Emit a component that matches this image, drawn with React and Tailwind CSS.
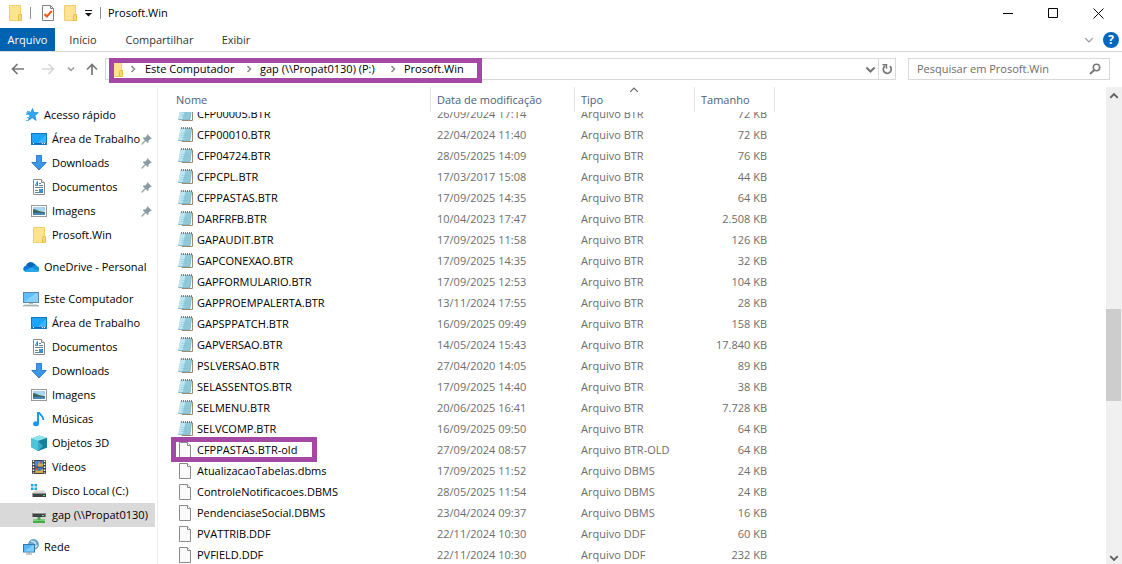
import { useLayoutEffect, useRef } from "react";

const files = [
  ["CFP00005.BTR", "26/09/2024 17:14", "Arquivo BTR", "72 KB"],
  ["CFP00010.BTR", "22/04/2024 11:40", "Arquivo BTR", "72 KB"],
  ["CFP04724.BTR", "28/05/2025 14:09", "Arquivo BTR", "76 KB"],
  ["CFPCPL.BTR", "17/03/2017 15:08", "Arquivo BTR", "44 KB"],
  ["CFPPASTAS.BTR", "17/09/2025 14:35", "Arquivo BTR", "64 KB"],
  ["DARFRFB.BTR", "10/04/2023 17:47", "Arquivo BTR", "2.508 KB"],
  ["GAPAUDIT.BTR", "17/09/2025 11:58", "Arquivo BTR", "126 KB"],
  ["GAPCONEXAO.BTR", "17/09/2025 14:35", "Arquivo BTR", "32 KB"],
  ["GAPFORMULARIO.BTR", "17/09/2025 12:53", "Arquivo BTR", "104 KB"],
  ["GAPPROEMPALERTA.BTR", "13/11/2024 17:55", "Arquivo BTR", "28 KB"],
  ["GAPSPPATCH.BTR", "16/09/2025 09:49", "Arquivo BTR", "158 KB"],
  ["GAPVERSAO.BTR", "14/05/2024 15:43", "Arquivo BTR", "17.840 KB"],
  ["PSLVERSAO.BTR", "27/04/2020 14:05", "Arquivo BTR", "89 KB"],
  ["SELASSENTOS.BTR", "17/09/2025 14:40", "Arquivo BTR", "38 KB"],
  ["SELMENU.BTR", "20/06/2025 16:41", "Arquivo BTR", "7.728 KB"],
  ["SELVCOMP.BTR", "16/09/2025 09:50", "Arquivo BTR", "64 KB"],
  ["CFPPASTAS.BTR-old", "27/09/2024 08:57", "Arquivo BTR-OLD", "64 KB"],
  ["AtualizacaoTabelas.dbms", "17/09/2025 11:52", "Arquivo DBMS", "24 KB"],
  ["ControleNotificacoes.DBMS", "28/05/2025 11:54", "Arquivo DBMS", "24 KB"],
  ["PendenciaseSocial.DBMS", "23/04/2024 09:37", "Arquivo DBMS", "16 KB"],
  ["PVATTRIB.DDF", "22/11/2024 10:30", "Arquivo DDF", "60 KB"],
  ["PVFIELD.DDF", "22/11/2024 10:30", "Arquivo DDF", "232 KB"],
];

function Svg({ children, w = 16, h = 16, className = "" }) {
  return (
    <svg width={w} height={h} viewBox={`0 0 ${w} ${h}`} fill="none" aria-hidden="true" className={`shrink-0 ${className}`}>
      {children}
    </svg>
  );
}

const Folder = () => (
  <Svg>
    <path d="M2.500 .5h11v15h-11z" fill="#ffe391" stroke="#f0cf6e" />
    <path d="M12 9.500h2.500v6h-3v-4.500z" fill="#f8d978" stroke="#e6bd45" />
  </Svg>
);

const CheckDoc = () => (
  <Svg>
    <path d="M2.500.5h8l3 3v12h-11z" fill="#fbfbfb" stroke="#808080" />
    <path d="M10.500.5v3h3" stroke="#808080" />
    <path d="M4.500 9l2.300 2.500 5-5.500" stroke="#ea5a21" strokeWidth="2" />
  </Svg>
);

const Star = () => (
  <Svg>
    <path d="M9.500 1.500l1.400 4 4.400.2-3.400 2.800 1.200 4.900-3.800-2.600-4 2.600 1.400-4.600-3.200-3 4.400-.2z" fill="#2fa7f2" stroke="#1784d2" strokeWidth=".7" />
    <path d="M4 4.500h3M3 7.500h3M4 10.500h3M3 13.500h2" stroke="#56b8f4" />
  </Svg>
);

const Desktop = () => (
  <Svg>
    <rect x=".5" y="2.500" width="15" height="11" fill="#1ea3fb" stroke="#0b79cb" />
    <path d="M6 13L15 4v9z" fill="#3fb3ff" />
    <path d="M1 12.500h14" stroke="#0d6fbc" />
    <path d="M2 12.500h1M11 12.500h1M13 12.500h1" stroke="#fff" />
  </Svg>
);

const Download = () => (
  <Svg>
    <path d="M5.500 .5h5v7h4.700L8 15 .8 7.500h4.700z" fill="#3d96e6" stroke="#2c7fd0" />
  </Svg>
);

const DocumentIcon = () => (
  <Svg>
    <path d="M2.500.5h8l3 3v12h-11z" fill="#fff" stroke="#8c8c8c" />
    <path d="M10.500.5v3h3" fill="#eee" stroke="#8c8c8c" />
    <path d="M4 6.500h3M8 4.500h2M8 6.500h4M4 8.500h8M4 11.500h3M4 13.500h8M8 10.500h4" stroke="#5c86ad" />
    <path d="M6.500 2.500L4.500 6M6.500 2.500V6" stroke="#1b87dd" />
    <path d="M8 10h4v3H8z" fill="#3a92d8" />
  </Svg>
);

const Picture = () => (
  <Svg>
    <rect x=".5" y="2.500" width="15" height="11" fill="#fff" stroke="#9a9a9a" />
    <path d="M2 4h12v4H2z" fill="#a9d5f5" />
    <path d="M2 6.500c2-1 4 .5 6 1.500l6 1v3H2z" fill="#386b62" />
    <path d="M2 10h12v2H2z" fill="#4a86b8" />
  </Svg>
);

const OneDrive = () => (
  <Svg>
    <path d="M3.500 13A3.200 3.200 0 0 1 3 6.700 4.900 4.900 0 0 1 11.500 5 4.200 4.200 0 0 1 14 7.300 2.900 2.900 0 0 1 13.700 13z" fill="#1490df" />
    <path d="M3 6.700A4.900 4.900 0 0 1 11.500 5l.5 1-4 2.500z" fill="#0364b8" />
    <path d="M3 6.700c1.700-.3 3 .3 5 1.800L1.200 12A3.200 3.200 0 0 1 3 6.700z" fill="#0f78d4" />
    <path d="M1.500 12L8.500 8.500 16 12a3 3 0 0 1-2.300 1H3.500a3 3 0 0 1-2-1z" fill="#28a8ea" />
  </Svg>
);

const Computer = () => (
  <Svg>
    <rect x=".5" y="1.500" width="15" height="10" fill="#5fbdfb" stroke="#5b88a8" />
    <path d="M1 11L13 2h2v9z" fill="#8ad0fd" />
    <path d="M6 12.500h4" stroke="#b4bcc2" />
    <path d="M0 15L2 14h12l2 1z" fill="#c3cbd1" stroke="#8797a3" strokeWidth=".6" />
  </Svg>
);

const Music = () => (
  <Svg>
    <path d="M7 1v11" stroke="#1698f3" strokeWidth="2" />
    <path d="M8 1c.3 3 4.800 3.500 4.300 8" stroke="#1698f3" strokeWidth="1.800" />
    <ellipse cx="5" cy="12.700" rx="3" ry="2.500" fill="#1698f3" />
  </Svg>
);

const Cube = () => (
  <Svg>
    <path d="M0 3.500L8.500 .5 16 3v9.500L7 16 0 12z" fill="#2fb3cc" />
    <path d="M0 3.500l8.500-3L16 3 7 6z" fill="#8ee3ee" />
    <path d="M0 3.500L7 6v10l-7-4z" fill="#4fc4d9" />
    <path d="M7 6l9-3v9.500L7 16z" fill="#14809b" />
    <path d="M7 6l5 5-5 5z" fill="#35adc4" />
  </Svg>
);

const Film = () => (
  <Svg>
    <path d="M1 1h14v14H1z" fill="#404040" />
    <path d="M2.500 1.500v13M13.500 1.500v13" stroke="#fff" strokeWidth="1.500" strokeDasharray="1.500 1.500" />
    <path d="M4 2h8v5.500H4z" fill="#4d87cf" />
    <path d="M4 8.500h8V14H4z" fill="#3c74bd" />
    <path d="M7 5l2-2 3 2v2.500H7zM5 11l3 1 4-2v4H4z" fill="#d0ad4e" />
    <path d="M9 2.500h2v2H9zM5 9h2v2H5z" fill="#ca493f" />
  </Svg>
);

const Disk = () => (
  <Svg>
    <path d="M1.500 10L4 7.500h9L15 10z" fill="#d2d2d2" />
    <path d="M1.500 10H15v4H1.500z" fill="#3e4144" />
    <path d="M1.500 10.500H15" stroke="#8c8f92" />
    <path d="M12 12.500h2" stroke="#52e06a" />
    <path d="M0 1h2.500v2.500H0zM3.500 1H6v2.500H3.500zM0 4.500h2.500V7H0zM3.500 4.500H6V7H3.500z" fill="#12a8e8" />
  </Svg>
);

const NetDisk = () => (
  <Svg>
    <path d="M1.500 6L4 3.500h8L14.500 6z" fill="#e2e2e2" />
    <path d="M1.500 6h13v4h-13z" fill="#404346" />
    <path d="M1.500 6.500h13" stroke="#909396" />
    <path d="M11 8.500h2" stroke="#6cf27c" />
    <path d="M6.500 10h3v2.500H14V16H2v-3.500h4.500z" fill="#43ad47" />
    <path d="M2 13.500h12" stroke="#79cf7b" />
  </Svg>
);

const Network = () => (
  <Svg>
    <circle cx="10.500" cy="5.500" r="5" fill="#6fa9cf" stroke="#4f86ad" strokeWidth=".7" />
    <path d="M8 2c1 1 3 0 4 1.500s-1 2-.5 3.500 2 1 2.500-1" stroke="#cce7f5" strokeWidth="1.500" />
    <rect x=".5" y="5.500" width="11" height="7.500" fill="#52b7f7" stroke="#3479a8" />
    <path d="M1 12.500L10 6h1v6.500z" fill="#80cdfb" />
    <path d="M6 13v1.500M3 15h6" stroke="#8b9aa5" />
  </Svg>
);

const Pin = () => (
  <Svg w={11} h={11}>
    <path d="M6.500 .5L10.500 4.500 9 5 7.500 6.500 7 9 4.800 6.800 1 10.500.5 10 4 6.200 2 4l2.500-.5L6 2z" fill="#8c9aa3" stroke="#8c9aa3" strokeWidth=".5" />
  </Svg>
);

const Notepad = () => (
  <Svg>
    <path d="M4 2h10.500v12.500H4z" fill="#fffef8" stroke="#9a8b70" />
    <path d="M2.500 1.500H13.500L12 13.500H.3z" fill="#8fcbdc" />
    <path d="M2.500 1.500h5L4.500 13.500H.3z" fill="#c0e5ee" />
    <path d="M13.500 1.500L12 13.500H.3" stroke="#6aa9bb" strokeWidth=".7" />
    <path d="M3.500 6.500h7M3.200 8.500h7M2.900 10.500h7" stroke="#7cbccd" strokeWidth=".4" />
    <path d="M3 1h11" stroke="#4d5e66" strokeWidth="1.500" strokeDasharray="1 1" />
  </Svg>
);

const Blank = () => (
  <Svg>
    <path d="M1.500 .5h8l3 3v12h-11z" fill="#fafafa" stroke="#8a8a8a" />
    <path d="M9.500 .5v3h3" fill="#fff" stroke="#8a8a8a" />
  </Svg>
);

const Chevron = ({ dir, size = 8, color = "#666", weight = 1.5, className = "" }) => {
  const paths = {
    right: "M2.500 1l3 3-3 3",
    down: "M1 2.500l3 3 3-3",
    up: "M1 5.500l3-3 3 3",
  };
  return (
    <svg width={size} height={size} viewBox="0 0 8 8" fill="none" aria-hidden="true" className={`shrink-0 ${className}`}>
      <path d={paths[dir]} stroke={color} strokeWidth={weight} />
    </svg>
  );
};

const groups = [
  {
    icon: Star,
    label: "Acesso rápido",
    items: [
      [Desktop, "Área de Trabalho", true],
      [Download, "Downloads", true],
      [DocumentIcon, "Documentos", true],
      [Picture, "Imagens", true],
      [Folder, "Prosoft.Win"],
    ],
  },
  { icon: OneDrive, label: "OneDrive - Personal", items: [] },
  {
    icon: Computer,
    label: "Este Computador",
    items: [
      [Desktop, "Área de Trabalho"],
      [DocumentIcon, "Documentos"],
      [Download, "Downloads"],
      [Picture, "Imagens"],
      [Music, "Músicas"],
      [Cube, "Objetos 3D"],
      [Film, "Vídeos"],
      [Disk, "Disco Local (C:)"],
      [NetDisk, "gap (\\\\Propat0130)", false, true],
    ],
  },
  { icon: Network, label: "Rede", items: [] },
];

function TitleBar() {
  return (
    <header className="flex h-[26px] shrink-0 items-center justify-between pl-[7px]">
      <div className="flex h-full items-center">
        <Folder />
        <span className="ml-[7px] h-3 w-px bg-[#909090]" />
        <button aria-label="Propriedades" className="ml-[9px]"><CheckDoc /></button>
        <button aria-label="Nova pasta" className="ml-[6px]"><Folder /></button>
        <button aria-label="Personalizar" className="ml-[6px]">
          <Svg w={9} h={8}>
            <path d="M1 1.500h7" stroke="#111" />
            <path d="M1 4h7L4.500 7.500z" fill="#111" />
          </Svg>
        </button>
        <span className="ml-[7px] h-3 w-px bg-[#909090]" />
        <h1 className="ml-[7px]">Prosoft.Win</h1>
      </div>
      <div className="flex h-full items-center">
        <button aria-label="Minimizar" className="flex h-full w-[45px] items-center justify-center">
          <Svg w={10} h={10}><path d="M0 5.500h10" stroke="#000" /></Svg>
        </button>
        <button aria-label="Maximizar" className="flex h-full w-[45px] items-center justify-center">
          <Svg w={10} h={10}><path d="M.5 .5h9v9h-9z" stroke="#000" /></Svg>
        </button>
        <button aria-label="Fechar" className="flex h-full w-[47px] items-center justify-center">
          <Svg w={11} h={11}><path d="M.5 .5l10 10M10.500 .5l-10 10" stroke="#000" /></Svg>
        </button>
      </div>
    </header>
  );
}

function Ribbon() {
  return (
    <div className="mt-[2px] flex h-6 shrink-0 items-center border-b border-[#dadbdc]">
      <button className="h-full w-[55px] bg-[#0063b1] text-white">Arquivo</button>
      <button className="h-full w-14 text-[#333]">Início</button>
      <button className="h-full w-[97px] text-[#333]">Compartilhar</button>
      <button className="h-full w-14 text-[#333]">Exibir</button>
      <div className="ml-auto flex items-center gap-[9px] pr-[3px]">
        <button aria-label="Expandir faixa"><Chevron dir="down" size={10} color="#999" weight={1} /></button>
        <button aria-label="Ajuda" className="flex size-4 items-center justify-center rounded-full bg-[#0067c0] text-[12px] font-bold text-white">?</button>
      </div>
    </div>
  );
}

function AddressBar() {
  return (
    <div className="flex h-[35px] shrink-0 items-start pt-[6px] pr-3">
      <div className="flex h-[22px] w-[105px] shrink-0 items-center pl-[11px]">
        <button aria-label="Voltar">
          <Svg w={14} h={12}><path d="M13 6H2M6.500 1L1.500 6l5 5" stroke="#777" strokeWidth="1.700" /></Svg>
        </button>
        <button aria-label="Avançar" className="ml-4">
          <Svg w={14} h={12}><path d="M1 6h11M7.500 1l5 5-5 5" stroke="#d8d8d8" strokeWidth="1.700" /></Svg>
        </button>
        <button aria-label="Locais recentes" className="ml-3"><Chevron dir="down" color="#999" /></button>
        <button aria-label="Acima" className="ml-[11px]">
          <Svg w={12} h={12}><path d="M6 12V2M1 6.500l5-5 5 5" stroke="#777" strokeWidth="1.700" /></Svg>
        </button>
      </div>
      <nav aria-label="Endereço" className="relative flex h-[22px] flex-1 items-center border border-[#d9d9d9]">
        <div className="flex items-center pl-[2px]">
          <Folder />
          <Chevron dir="right" color="#888" className="ml-[5px]" />
          <a href="#computador" className="ml-2 w-[100px] whitespace-nowrap">Este Computador</a>
          <Chevron dir="right" color="#888" />
          <a href="#gap" className="ml-[7px] w-[129px] whitespace-nowrap">gap (\\Propat0130) (P:)</a>
          <Chevron dir="right" color="#888" />
          <a href="#prosoft" className="ml-[7px] whitespace-nowrap">Prosoft.Win</a>
        </div>
        <span className="absolute -top-px left-[3px] h-[25px] w-[373px] border-[5px] border-[#a349a4]" />
        <button aria-label="Locais anteriores" className="ml-auto mr-[2px]"><Chevron dir="down" size={11} color="#777" /></button>
        <button aria-label="Atualizar" className="flex h-full w-[17px] items-center justify-center border-l border-[#d9d9d9]">
          <Svg w={12} h={12}>
            <path d="M8.800 3.200A4 4 0 1 1 4 3" stroke="#777" strokeWidth="1.700" />
            <path d="M1.500 1.800h4v4" stroke="#777" strokeWidth="1.500" />
          </Svg>
        </button>
      </nav>
      <label className="ml-3 flex h-[22px] w-[202px] shrink-0 items-center border border-[#d9d9d9] px-2">
        <input aria-label="Pesquisar em Prosoft.Win" placeholder="Pesquisar em Prosoft.Win" className="min-w-0 flex-1 bg-transparent outline-none placeholder:text-[#6d6d6d]" />
        <Svg w={12} h={12}>
          <circle cx="7.500" cy="4.500" r="3.200" stroke="#777" strokeWidth="1.500" />
          <path d="M5.200 7L1 11" stroke="#777" strokeWidth="2" />
        </Svg>
      </label>
    </div>
  );
}

function Sidebar() {
  return (
    <nav aria-label="Pastas" className="flex w-[158px] shrink-0 flex-col gap-2 overflow-hidden border-r border-[#f0f0f0] pt-4">
      {groups.map(({ icon: Icon, label, items }) => (
        <ul key={label}>
          <li className="flex h-6 items-center pl-[23px] whitespace-nowrap">
            <Icon />
            <a href="#grupo" className="ml-[5px]">{label}</a>
          </li>
          {items.map(([ItemIcon, name, pinned, selected]) => (
            <li key={name} className={`mr-[2px] flex h-6 items-center pl-[31px] whitespace-nowrap ${selected ? "bg-[#d9d9d9]" : ""}`}>
              <ItemIcon />
              <a href="#pasta" className="ml-[5px]">{name}</a>
              {pinned && <span className="mr-[3px] ml-auto"><Pin /></span>}
            </li>
          ))}
        </ul>
      ))}
    </nav>
  );
}

const headCell = "sticky top-0 z-10 h-[25px] border-r border-[#e5e5e5] bg-white p-0 pl-[6px] text-left font-normal";

function FileList() {
  const ref = useRef(null);
  useLayoutEffect(() => {
    ref.current.scrollTop = 9;
  }, []);
  return (
    <div ref={ref} className="min-w-0 flex-1 overflow-hidden pl-3">
      <table className="table-fixed border-separate border-spacing-0 whitespace-nowrap text-[#6d6d6d]">
        <colgroup>
          <col className="w-[261px]" />
          <col className="w-36" />
          <col className="w-[120px]" />
          <col className="w-20" />
        </colgroup>
        <thead className="text-[#4c607a]">
          <tr>
            <th className={headCell}>Nome</th>
            <th className={headCell}>Data de modificação</th>
            <th className={headCell}>
              Tipo
              <Chevron dir="up" size={10} weight={1} className="absolute -top-[2px] left-[54px]" />
            </th>
            <th className={headCell}>Tamanho</th>
          </tr>
        </thead>
        <tbody>
          {files.map(([name, date, type, size]) => (
            <tr key={name}>
              <td className="h-[21px] p-0 pl-2 text-black">
                <div className="relative flex items-center gap-[3px]">
                  {name.endsWith(".BTR") ? <Notepad /> : <Blank />}
                  {name}
                  {name.endsWith("-old") && (
                    <span className="absolute -top-[5px] -left-[7px] h-[25px] w-[146px] border-[5px] border-[#a349a4]" />
                  )}
                </div>
              </td>
              <td className="p-0 pl-[6px]">{date}</td>
              <td className="p-0 pl-[6px]">{type}</td>
              <td className="p-0 pr-2 text-right">{size}</td>
            </tr>
          ))}
        </tbody>
      </table>
    </div>
  );
}

function ScrollBar() {
  return (
    <div className="flex w-4 shrink-0 flex-col items-center bg-[#f0f0f0]">
      <button aria-label="Rolar para cima" className="flex h-[17px] items-center"><Chevron dir="up" size={10} color="#606060" weight={1.5} /></button>
      <div className="grow-[205]" />
      <div className="h-[92px] w-full border-r border-[#f0f0f0] bg-[#cdcdcd]" />
      <div className="grow-[151]" />
      <button aria-label="Rolar para baixo" className="flex h-3 items-center"><Chevron dir="down" size={10} color="#606060" weight={1.5} /></button>
    </div>
  );
}

export default function App() {
  return (
    <div className="flex h-screen flex-col overflow-hidden bg-white font-['Open_Sans',sans-serif] text-[11px] leading-4 text-black">
      <TitleBar />
      <Ribbon />
      <AddressBar />
      <main className="flex min-h-0 flex-1">
        <Sidebar />
        <FileList />
        <ScrollBar />
      </main>
    </div>
  );
}
